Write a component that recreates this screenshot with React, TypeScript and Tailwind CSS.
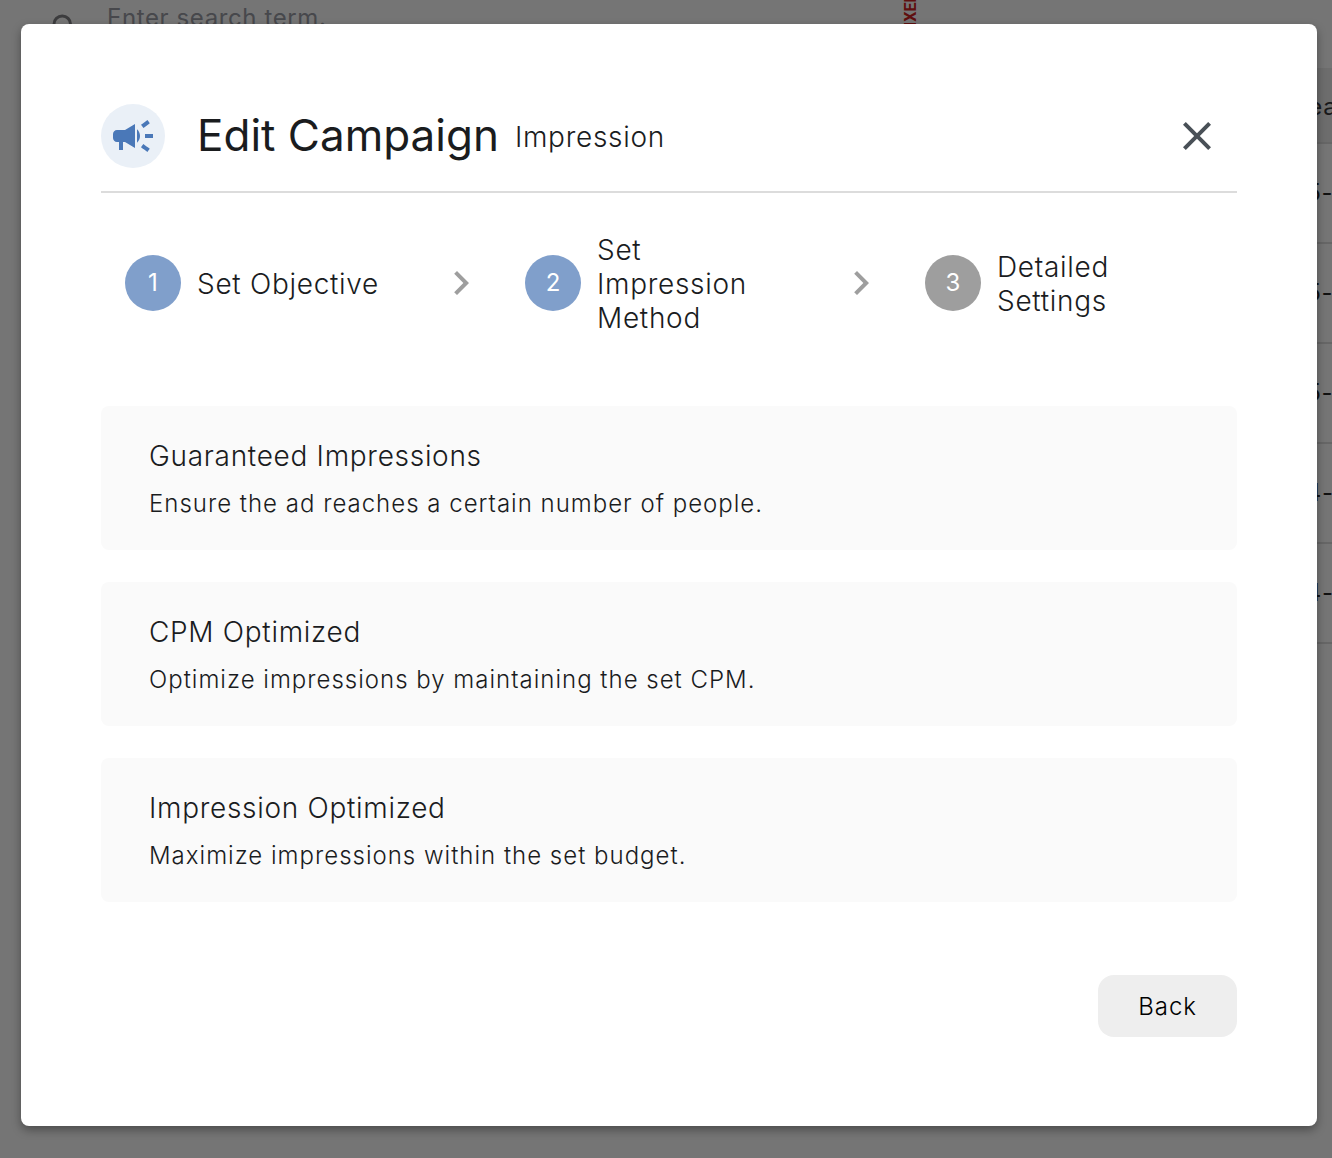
import { MdCampaign, MdChevronRight, MdClose, MdSearch } from "react-icons/md";

const steps = [
  { id: 1, label: "Set Objective", active: true },
  { id: 2, label: "Set Impression Method", active: true },
  { id: 3, label: "Detailed Settings", active: false },
];

const methods = [
  {
    title: "Guaranteed Impressions",
    description: "Ensure the ad reaches a certain number of people.",
  },
  {
    title: "CPM Optimized",
    description: "Optimize impressions by maintaining the set CPM.",
  },
  {
    title: "Impression Optimized",
    description: "Maximize impressions within the set budget.",
  },
];

const createdDates = ["2025-", "2025-", "2025-", "2024-", "2024-"];

/* Campaign list, mostly covered by the dialog */
function CampaignList() {
  return (
    <div
      className="absolute inset-0 overflow-hidden bg-[#757575] text-2xl font-normal tracking-wide"
      aria-hidden="true"
    >
      <div className="flex h-[68px] items-start pl-12">
        <MdSearch className="mt-[10px] size-9 shrink-0 text-[#3c3c3e]" />
        <input
          type="text"
          aria-label="Search"
          tabIndex={-1}
          placeholder="Enter search term."
          className="ml-[23px] h-[34px] w-72 tracking-wide placeholder:text-[#47484c]"
        />
        <span className="mt-[-16px] ml-[508px] font-['Roboto',sans-serif] text-base leading-4 font-bold tracking-normal text-[#5f0f0f] [writing-mode:sideways-lr]">
          PIXELS
        </span>
      </div>
      <table className="ml-auto w-[200px] border-collapse">
        <thead>
          <tr className="h-[75px] border-b-2 border-[#666666] bg-[#6d6d6d]">
            <th />
            <th className="w-[76px] max-w-[76px] p-0 pt-1 pl-[25px] text-left font-normal whitespace-nowrap text-[#19191b]">
              Created
            </th>
          </tr>
        </thead>
        <tbody>
          {createdDates.map((date, i) => (
            <tr key={i} className="h-[100px] border-b-2 border-[#666666]">
              <td />
              <td className="w-[76px] max-w-[76px] p-0 pl-1 whitespace-nowrap text-[#111111]">{date}</td>
            </tr>
          ))}
        </tbody>
      </table>
    </div>
  );
}

function Step({ id, label, active, last }: { id: number; label: string; active: boolean; last: boolean }) {
  return (
    <li className={last ? "flex w-72 items-center" : "flex flex-1 items-center"}>
      <div className="flex flex-1 items-center gap-4 pr-12">
        <span
          className={
            "flex size-14 shrink-0 items-center justify-center rounded-full text-2xl font-normal text-white " +
            (active ? "bg-[#809fcb]" : "bg-[#9e9e9e]")
          }
        >
          {id}
        </span>
        <span className="pt-[2px] text-[28px] leading-[34px] tracking-wide">{label}</span>
      </div>
      {!last && <MdChevronRight className="mr-10 size-12 shrink-0 text-[#9e9e9e]" />}
    </li>
  );
}

export default function App() {
  return (
    <div className="relative min-h-screen font-['Inter',sans-serif] font-light text-[#1a1c1e]">
      <CampaignList />

      <div className="relative pt-6 pr-[15px] pb-8 pl-[21px]">
        <section
          role="dialog"
          aria-labelledby="dialog-title"
          className="rounded-lg bg-white px-20 pt-20 pb-[89px] shadow-[0_4px_10px_rgba(0,0,0,0.35)]"
        >
          <header className="flex items-center border-b-2 border-[#dcdcdc] pb-[23px]">
            <span className="flex size-16 items-center justify-center rounded-full bg-[#eaf0f7]">
              <MdCampaign className="size-12 text-[#4a78b8]" />
            </span>
            <h1 id="dialog-title" className="ml-8 pb-[2px] text-[44px] leading-[54px] font-normal">
              Edit Campaign
            </h1>
            <span className="ml-4 pt-[2px] text-[28px] leading-[34px] tracking-wide">Impression</span>
            <button type="button" aria-label="Close" className="mr-4 ml-auto text-[#495057]">
              <MdClose className="size-12" />
            </button>
          </header>

          <ol className="flex items-center px-6 pt-[38px]">
            {steps.map((step, i) => (
              <Step key={step.id} {...step} last={i === steps.length - 1} />
            ))}
          </ol>

          <div className="mt-[71px] flex flex-col gap-8">
            {methods.map((method) => (
              <button
                key={method.title}
                type="button"
                className="flex flex-col gap-4 rounded-lg bg-[#fafafa] px-12 pt-[33px] pb-[31px] text-left"
              >
                <span className="text-[28px] leading-[34px] tracking-wide">{method.title}</span>
                <span className="text-2xl leading-[30px] tracking-[1px]">{method.description}</span>
              </button>
            ))}
          </div>

          <footer className="mt-[73px] flex justify-end">
            <button
              type="button"
              className="rounded-2xl bg-[#eeeeee] px-10 pt-[17px] pb-[15px] text-2xl leading-[30px] tracking-[1px] text-black"
            >
              Back
            </button>
          </footer>
        </section>
      </div>
    </div>
  );
}
